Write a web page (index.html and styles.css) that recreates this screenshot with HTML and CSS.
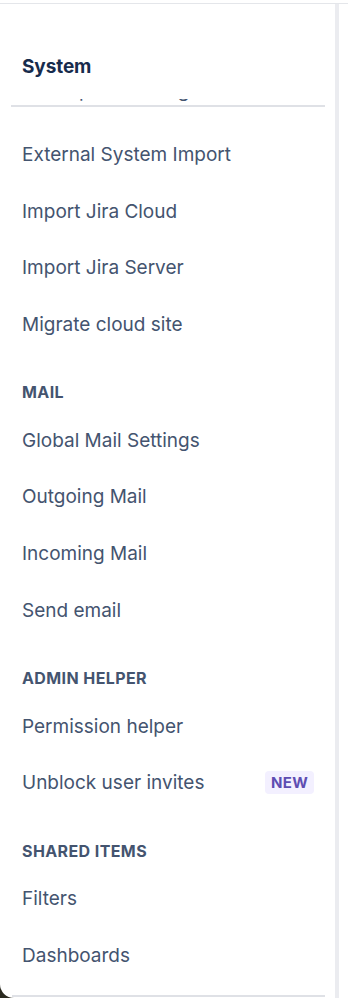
FILE: index.html
```html
<!DOCTYPE html>
<html lang="en">
<head>
  <meta charset="UTF-8" />
  <title>Jira Settings - System</title>
  <link rel="stylesheet" href="styles.css">
</head>
<body>
  <div class="window">
    <!-- Sidebar -->
    <div class="sidebar-wrap">
      <nav class="sidebar">
        <div class="sidebar-header">
          <h2>System</h2>
        </div>
        <div class="scroll-edge">
          <div class="peek">Workspace settings</div>
        </div>

        <div class="nav">
          <a href="#">External System Import</a>
          <a href="#">Import Jira Cloud</a>
          <a href="#">Import Jira Server</a>
          <a href="#">Migrate cloud site</a>

          <h3>Mail</h3>
          <a href="#">Global Mail Settings</a>
          <a href="#">Outgoing Mail</a>
          <a href="#">Incoming Mail</a>
          <a href="#">Send email</a>

          <h3>Admin helper</h3>
          <a href="#">Permission helper</a>
          <a href="#">Unblock user invites <span class="lozenge">New</span></a>

          <h3>Shared items</h3>
          <a href="#">Filters</a>
          <a href="#">Dashboards</a>
        </div>

        <div class="h-track"></div>
      </nav>
    </div>
    <!-- Scrollbar track -->
    <div class="v-track"></div>
  </div>
</body>
</html>
```

FILE: styles.css
```css
:root {
  --text-color: #44546f;
  --heading-color: #172b4d;
  --section-color: #44546f;
  --divider: #dfe1e6;
  --track: #ebecf0;
  --font-family: 'Inter', 'Noto Sans', sans-serif;
}

body {
  margin: 0;
  padding: 0;
  font-family: var(--font-family);
  background-color: #fff;
  color: var(--text-color);
}

.window {
  margin-top: 3px;
  border-top: 1px solid #e4e6ea;
  display: flex;
  height: 994px;
  overflow: hidden;
}

/* Sidebar */
.sidebar-wrap {
  width: 335px;
  background-color: #2b2a20; /* dark desktop behind the rounded corner */
}
.sidebar {
  height: 100%;
  background-color: #fff;
  border-bottom-left-radius: 14px;
  display: flex;
  flex-direction: column;
  overflow: hidden;
}
.sidebar-header {
  padding: 51px 22px 0;
  height: 44px;
}
.sidebar-header h2 {
  margin: 0;
  font-size: 19px;
  line-height: 24px;
  font-weight: 700;
  color: var(--heading-color);
  letter-spacing: -0.1px;
}

/* list scrolled under the header: only descenders are visible */
.scroll-edge {
  margin: 0 10px 0 11px;
  height: 6px;
  overflow: hidden;
  border-bottom: 2px solid var(--divider);
}
.peek {
  margin-top: -20px;
  padding-left: 11px;
  font-size: 19px;
  line-height: 24px;
}

.nav {
  display: flex;
  flex-direction: column;
  padding-top: 19px;
}
.nav a {
  display: flex;
  align-items: center;
  justify-content: space-between;
  height: 56.7px;
  padding: 0 21px 0 22px;
  text-decoration: none;
  color: var(--text-color);
  font-size: 19px;
}
.nav h3 {
  margin: 28.6px 22px 8.6px;
  font-size: 16px;
  line-height: 22px;
  font-weight: 700;
  text-transform: uppercase;
  color: var(--section-color);
  letter-spacing: 0.4px;
}
.lozenge {
  background-color: #f3f0ff;
  color: #5e4db2;
  font-size: 15px;
  font-weight: 700;
  text-transform: uppercase;
  padding: 2px 6px;
  border-radius: 4px;
  letter-spacing: 0.3px;
}

.h-track {
  margin: auto 10px 1px 12px;
  height: 2px;
  background-color: var(--divider);
}

/* Scrollbar */
.v-track {
  width: 4px;
  background-color: var(--track);
}
```
